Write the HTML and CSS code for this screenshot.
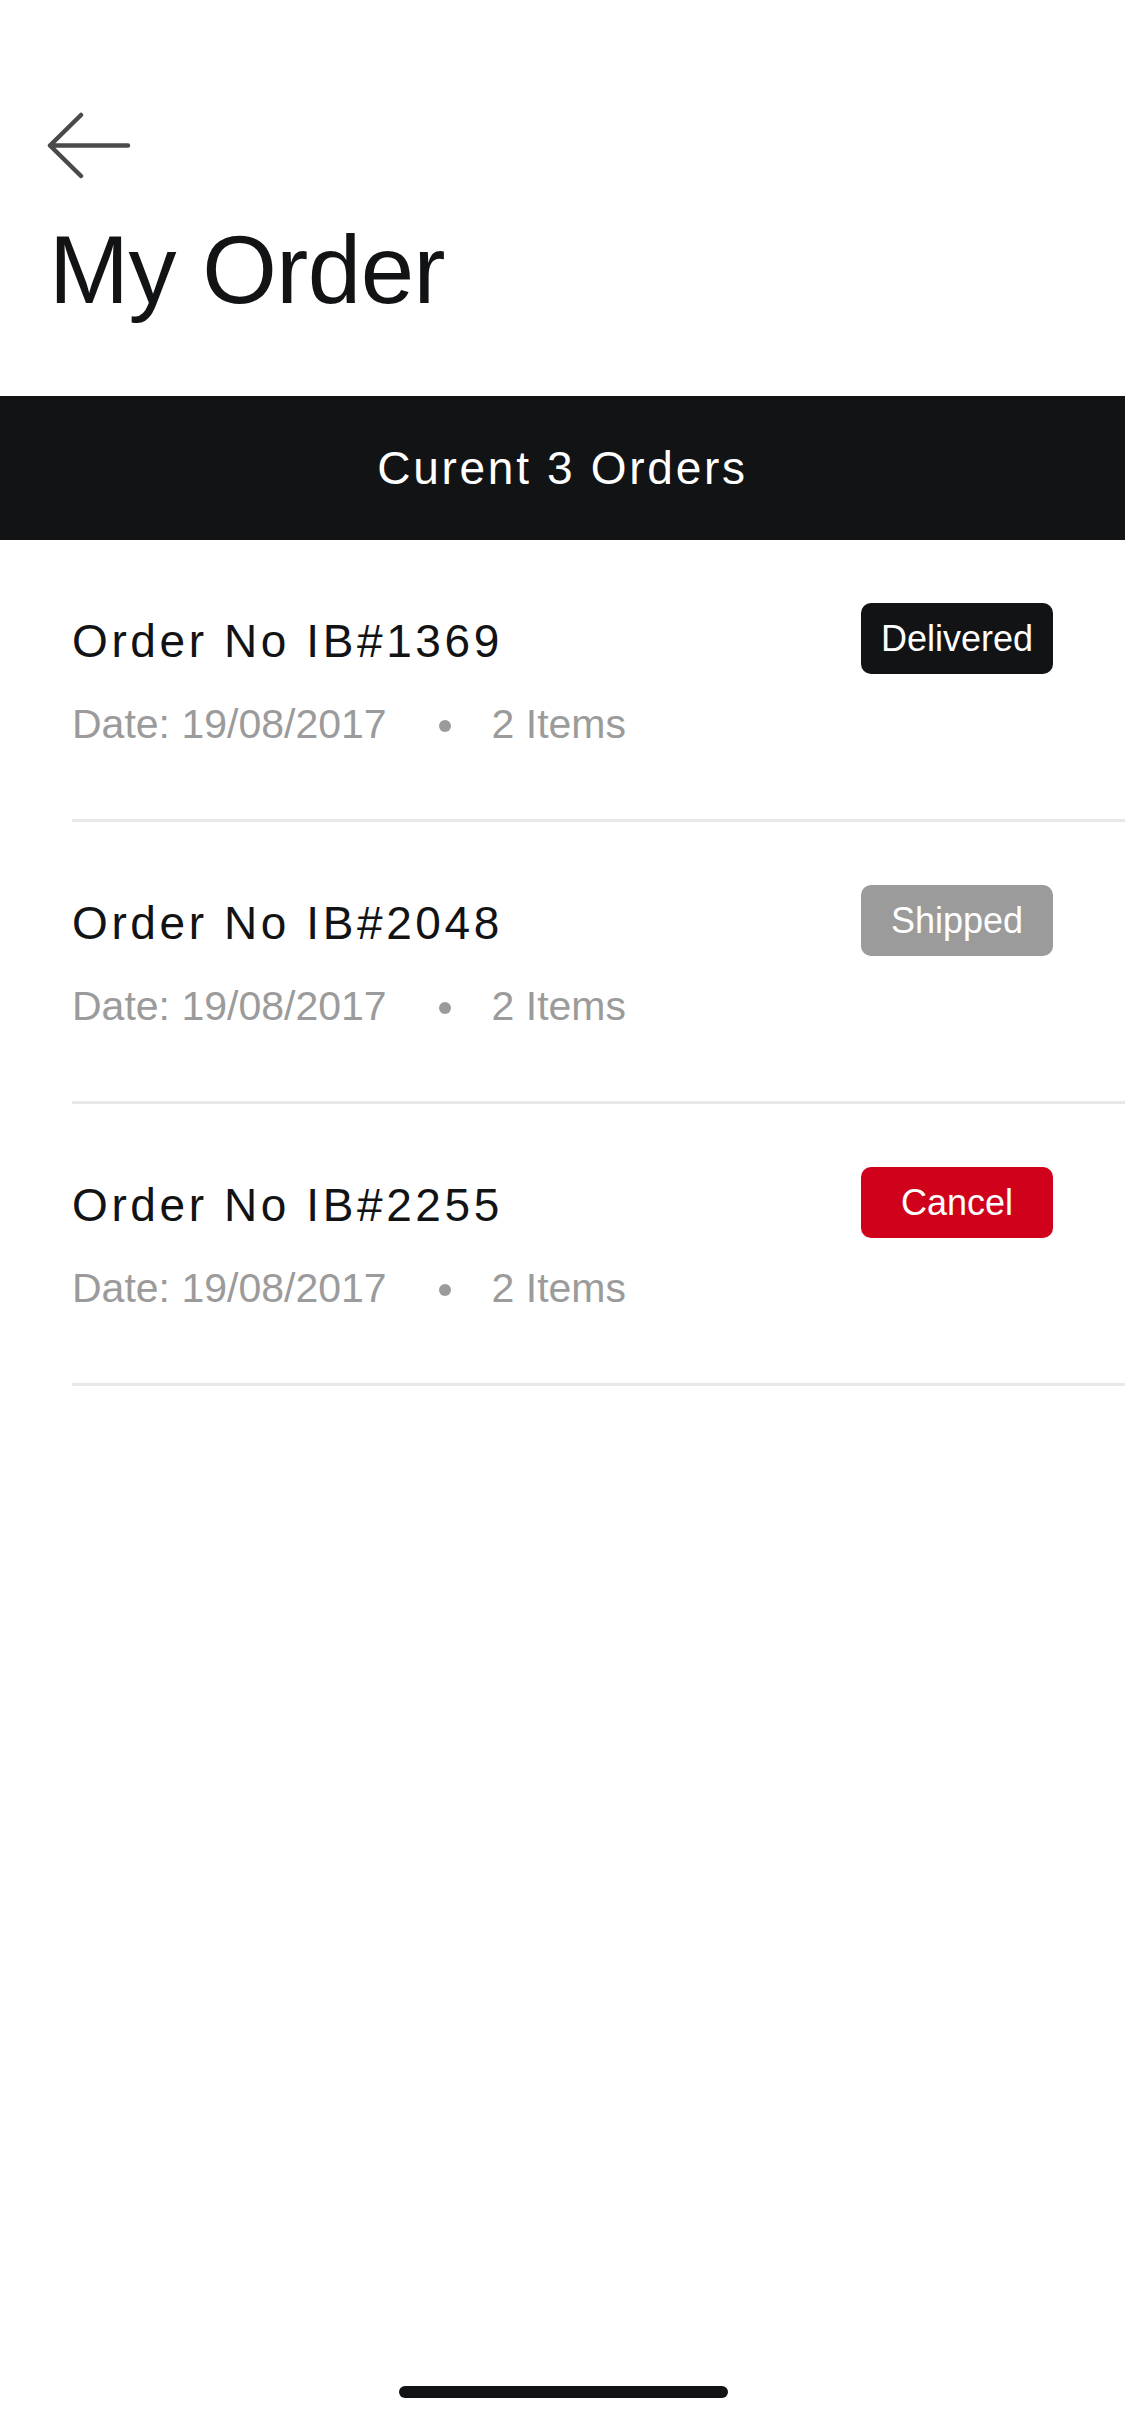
FILE: index.html
```html
<!DOCTYPE html>
<html lang="en">
<head>
  <meta charset="UTF-8">
  <meta name="viewport" content="width=device-width, initial-scale=1.0">
  <title>My Order</title>
  <link rel="stylesheet" href="styles.css">
</head>
<body>

  <!-- Header -->
  <div class="header">
    <a href="#" class="back-btn">
      <svg width="88" height="68" viewBox="0 0 88 68">
        <path d="M82 33.5H4M35 3L4 33.5L35 64" fill="none" stroke="#4a4a4a" stroke-width="4.5" stroke-linecap="round" stroke-linejoin="round"/>
      </svg>
    </a>
    <h1>My Order</h1>
  </div>

  <!-- Summary Bar -->
  <div class="summary-bar">Curent 3 Orders</div>

  <!-- Orders -->
  <div class="order-list">
    <div class="order-row">
      <div class="order-head">
        <div class="order-title">Order No IB#1369</div>
        <span class="status status-delivered">Delivered</span>
      </div>
      <div class="order-meta">
        <span>Date: 19/08/2017</span>
        <span class="dot"></span>
        <span>2 Items</span>
      </div>
    </div>

    <div class="order-row">
      <div class="order-head">
        <div class="order-title">Order No IB#2048</div>
        <span class="status status-shipped">Shipped</span>
      </div>
      <div class="order-meta">
        <span>Date: 19/08/2017</span>
        <span class="dot"></span>
        <span>2 Items</span>
      </div>
    </div>

    <div class="order-row">
      <div class="order-head">
        <div class="order-title">Order No IB#2255</div>
        <span class="status status-cancel">Cancel</span>
      </div>
      <div class="order-meta">
        <span>Date: 19/08/2017</span>
        <span class="dot"></span>
        <span>2 Items</span>
      </div>
    </div>
  </div>

  <!-- Home Indicator -->
  <div class="home-indicator"></div>

</body>
</html>
```

FILE: styles.css
```css
/* General Styling */
body {
  font-family: "Liberation Sans", Arial, sans-serif;
  background-color: #fff;
  color: #121315;
  margin: 0;
  padding: 0;
  width: 1125px;
  height: 2436px;
  position: relative;
  overflow: hidden;
}

/* Header */
.header {
  padding: 112px 0 0 46px;
  height: 396px;
  box-sizing: border-box;
}

.back-btn {
  display: block;
  width: 88px;
  height: 68px;
}

.back-btn svg {
  display: block;
}

h1 {
  margin: 42px 0 0 3px;
  font-size: 96px;
  line-height: 96px;
  font-weight: normal;
  letter-spacing: -0.5px;
  color: #121315;
}

/* Summary Bar */
.summary-bar {
  background-color: #121315;
  color: #fff;
  height: 144px;
  display: flex;
  align-items: center;
  justify-content: center;
  font-size: 46px;
  letter-spacing: 2.7px;
}

/* Order Rows */
.order-row {
  margin-left: 72px;
  padding: 63px 72px 71px 0;
  border-bottom: 3px solid #e8e8e8;
}

.order-head {
  display: flex;
  justify-content: space-between;
  align-items: flex-start;
}

.order-title {
  margin-top: 11px;
  font-size: 46px;
  line-height: 54px;
  letter-spacing: 3.6px;
  color: #121315;
}

.status {
  width: 192px;
  height: 71px;
  border-radius: 10px;
  display: flex;
  align-items: center;
  justify-content: center;
  color: #fff;
  font-size: 36px;
}

.status-delivered {
  background-color: #121315;
}

.status-shipped {
  background-color: #9b9b9b;
}

.status-cancel {
  background-color: #d0021b;
}

.order-meta {
  margin-top: 26px;
  display: flex;
  align-items: center;
  font-size: 41px;
  line-height: 48px;
  color: #9b9b9b;
}

.dot {
  width: 12px;
  height: 12px;
  border-radius: 50%;
  background-color: #9b9b9b;
  margin: 4px 41px 0 52px;
}

/* Home Indicator */
.home-indicator {
  position: absolute;
  left: 399px;
  bottom: 38px;
  width: 329px;
  height: 12px;
  border-radius: 6px;
  background-color: #121315;
}
```
